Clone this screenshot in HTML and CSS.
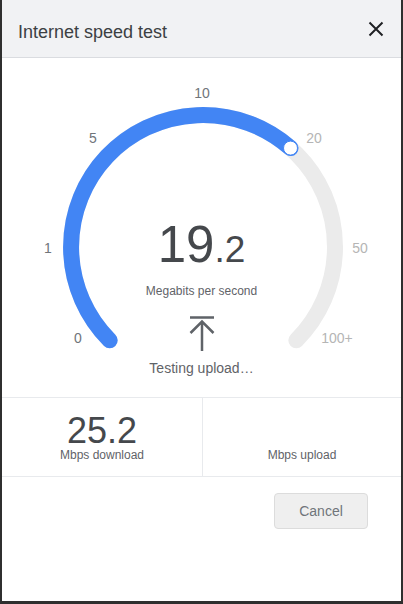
FILE: index.html
```html
<!DOCTYPE html>
<html>
<head>
<meta charset="utf-8">
<link rel="stylesheet" href="styles.css">
</head>
<body>
<div class="dialog">
  <header class="header">
    <h1 class="title">Internet speed test</h1>
    <svg class="close" width="16" height="16" viewBox="0 0 16 16"><path d="M1.5 1.5 L14.5 14.5 M14.5 1.5 L1.5 14.5" stroke="#202124" stroke-width="2" fill="none"/></svg>
  </header>
  <section class="gauge">
    <svg class="dial" width="399" height="339" viewBox="0 0 399 339">
      <path d="M107.7 282.3 A132 132 0 1 1 294.3 282.3" stroke="#ebebeb" stroke-width="16" fill="none" stroke-linecap="round"/>
      <path d="M107.7 282.3 A132 132 0 0 1 288.5 90.1" stroke="#4285f4" stroke-width="16" fill="none" stroke-linecap="round"/>
      <circle cx="288.5" cy="90.1" r="7" fill="#fff" stroke="#4285f4" stroke-width="1"/>
      <g class="ticks">
        <text x="76" y="280" class="on">0</text>
        <text x="46" y="190" class="on">1</text>
        <text x="91" y="80" class="on">5</text>
        <text x="200" y="35" class="on">10</text>
        <text x="312" y="80" class="off">20</text>
        <text x="358" y="190" class="off">50</text>
        <text x="335" y="280" class="off">100+</text>
      </g>
    </svg>
    <div class="readout">
      <div class="speed"><span class="int">19</span><span class="dec">.2</span></div>
      <div class="unit">Megabits per second</div>
      <svg class="upicon" width="26" height="36" viewBox="0 0 26 36"><path d="M1 2.5 H25 M13 6 V36 M1.5 18 L13 6.5 L24.5 18" stroke="#5f6368" stroke-width="2.5" fill="none"/></svg>
      <div class="status">Testing upload…</div>
    </div>
  </section>
  <section class="stats">
    <div class="cell">
      <div class="value">25.2</div>
      <div class="label">Mbps download</div>
    </div>
    <div class="cell">
      <div class="value"></div>
      <div class="label">Mbps upload</div>
    </div>
  </section>
  <footer class="footer">
    <button class="cancel">Cancel</button>
  </footer>
</div>
</body>
</html>
```
FILE: styles.css
```css
html, body {
  margin: 0;
  padding: 0;
  background: #2f2f2f;
  font-family: "Liberation Sans", Arial, sans-serif;
}
.dialog {
  margin: 0 2px;
  width: 399px;
  height: 601px;
  background: #fff;
  display: flex;
  flex-direction: column;
}
.header {
  height: 57px;
  background: #f1f2f4;
  border-bottom: 1px solid #dadce0;
  display: flex;
  align-items: center;
  justify-content: space-between;
  padding: 0 17px 0 16px;
}
.title {
  margin: 0;
  font-size: 18px;
  font-weight: normal;
  color: #3c4043;
  padding-top: 8px;
}
.close {
  display: block;
  margin-top: 0;
}
.gauge {
  height: 339px;
  display: grid;
}
.dial, .readout {
  grid-area: 1 / 1;
}
.ticks text {
  font-size: 14px;
  text-anchor: middle;
  dominant-baseline: central;
}
.ticks .on { fill: #70757a; }
.ticks .off { fill: #b5b5b5; }
.readout {
  display: flex;
  flex-direction: column;
  align-items: center;
  padding-top: 161px;
  color: #5f6368;
}
.speed {
  line-height: 51px;
  height: 51px;
  color: #45484c;
}
.int { font-size: 51px; }
.dec { font-size: 37px; }
.unit {
  margin-top: 14px;
  font-size: 12px;
  line-height: 14px;
}
.upicon {
  display: block;
  margin-top: 17px;
}
.status {
  margin-top: 9px;
  font-size: 14px;
  line-height: 16px;
}
.stats {
  display: grid;
  grid-template-columns: 200px 1fr;
  border-top: 1px solid #e8eaed;
  border-bottom: 1px solid #e8eaed;
  height: 78px;
}
.cell {
  display: flex;
  flex-direction: column;
  align-items: center;
  padding-top: 15px;
}
.cell + .cell {
  border-left: 1px solid #e8eaed;
}
.value {
  font-size: 36px;
  line-height: 36px;
  height: 36px;
  color: #45484c;
}
.label {
  font-size: 12px;
  line-height: 12px;
  color: #5f6368;
}
.footer {
  display: flex;
  justify-content: flex-end;
  padding: 16px 33px 0 0;
}
.cancel {
  width: 94px;
  height: 36px;
  background: #efefef;
  border: 1px solid #dcdcdc;
  border-radius: 4px;
  font-family: "Liberation Sans", Arial, sans-serif;
  font-size: 14px;
  color: #70757a;
  padding: 0;
}
```
